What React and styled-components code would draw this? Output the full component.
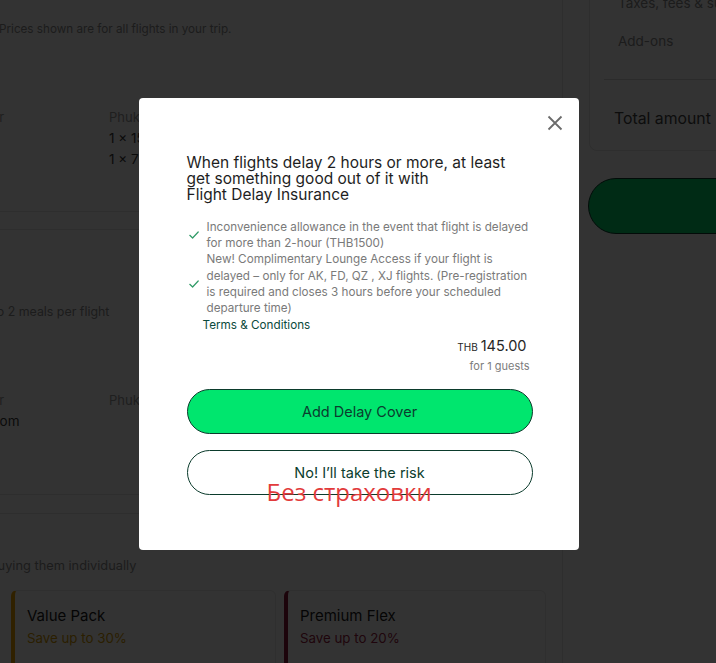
import styled, { createGlobalStyle } from 'styled-components';

const Global = createGlobalStyle`
  html, body {
    margin: 0;
    padding: 0;
    background: #ffffff;
  }
  body {
    font-family: Inter, "Noto Sans", "Liberation Sans", sans-serif;
  }
`

const Screen = styled.div`
  position: relative;
  width: 716px;
  height: 663px;
  overflow: hidden;
  background: #ffffff;
`

const Page = styled.div`
  display: flex;
  gap: 25px;
  margin-left: -100px;
  margin-top: -40px;
`

const MainCol = styled.div`
  width: 663px;
  flex-shrink: 0;
  display: flex;
  flex-direction: column;
  gap: 17px;
`

const Card = styled.section`
  box-sizing: border-box;
  height: ${p => p.$h}px;
  border: 1px solid #e4e4e4;
  border-radius: 8px;
  padding: ${p => p.$pt || 0}px 20px 0 38px;
  margin-top: ${p => p.$mt || 0}px;
`

const Note = styled.p`
  margin: 0 0 0 ${p => p.$ml || 0}px;
  font-size: ${p => p.$size || 11}px;
  line-height: 16px;
  color: #8d8d8d;
`

const Row = styled.div`
  display: grid;
  grid-template-columns: 170px 1fr;
  margin-top: ${p => p.$mt}px;
  font-size: 13px;
  line-height: 21px;
`

const Label = styled.div`
  color: #9a9a9a;
`

const Value = styled.div`
  color: #3a3a3a;
  font-size: 13.5px;
`

const Packs = styled.div`
  display: grid;
  grid-template-columns: 265px 262px;
  gap: 8px;
  margin: 16px 0 0 72px;
`

const Pack = styled.div`
  height: 90px;
  border: 1px solid #e8e8e8;
  border-left: 4px solid ${p => p.$accent};
  border-radius: 6px;
  padding: 16px 12px;
  box-sizing: border-box;
`

const PackTitle = styled.div`
  font-size: 15px;
  line-height: 18px;
  color: #1a1a1a;
`

const PackSave = styled.div`
  font-size: 13.3px;
  line-height: 18px;
  margin-top: 4px;
  color: ${p => p.$color};
`

const Side = styled.aside`
  width: 300px;
  flex-shrink: 0;
`

const SideCard = styled.div`
  box-sizing: border-box;
  height: 191px;
  border: 1px solid #e4e4e4;
  border-radius: 8px;
  padding: 32px 0 0 24px;
  margin-left: 1px;
`

const SideLine = styled.div`
  font-size: ${p => p.$size || 13.5}px;
  line-height: 20px;
  color: ${p => p.$color || '#8a8a8a'};
  margin-top: ${p => p.$mt || 0}px;
  margin-left: ${p => p.$ml || 0}px;
`

const Divider = styled.hr`
  border: none;
  border-top: 1px solid #d8d8d8;
  margin: 28px 0 0 -10px;
`

const BigButton = styled.div`
  height: 56px;
  margin-top: 27px;
  border-radius: 28px;
  background: #00d66a;
  border: 1px solid #0a3b2b;
  box-sizing: border-box;
`

const Overlay = styled.div`
  position: absolute;
  inset: 0;
  background: rgba(0, 0, 0, 0.8);
  display: flex;
  justify-content: center;
  align-items: flex-start;
  padding-top: 98px;
  box-sizing: border-box;
`

const Modal = styled.div`
  width: 440px;
  height: 452px;
  box-sizing: border-box;
  background: #ffffff;
  border-radius: 4px;
  margin-left: 1px;
`

const CloseRow = styled.div`
  display: flex;
  justify-content: flex-end;
  padding: 14px 13px 0 0;
`

const CloseBtn = styled.button`
  width: 22px;
  height: 22px;
  padding: 0;
  border: none;
  background: none;
  display: flex;
  align-items: center;
  justify-content: center;
`

const Body = styled.div`
  padding: 0 46px 0 48px;
`

const Title = styled.h2`
  margin: 21px 0 0;
  font-size: 15.5px;
  line-height: 16px;
  font-weight: 400;
  color: #1e1e1e;
  span {
    display: block;
  }
`

const List = styled.ul`
  list-style: none;
  margin: 16px 0 0;
  padding: 0;
`

const Item = styled.li`
  display: flex;
  align-items: center;
  gap: 8px;
  padding-left: 2px;
  font-size: 11.7px;
  line-height: 16.2px;
  color: #7a7a7a;
  svg {
    flex-shrink: 0;
  }
`

const Terms = styled.a`
  display: block;
  margin: 1px 0 0 16px;
  font-size: 11.7px;
  line-height: 16px;
  color: #0b4a3c;
  text-decoration: none;
`

const PriceBox = styled.div`
  display: flex;
  flex-direction: column;
  align-items: flex-end;
  margin-top: 3px;
`

const Price = styled.div`
  padding-right: 6px;
  font-size: 14.5px;
  line-height: 20px;
  color: #262626;
  small {
    font-size: 10px;
    margin-right: 3px;
  }
`

const Guests = styled.div`
  padding-right: 3px;
  font-size: 11px;
  line-height: 18px;
  color: #7c7c7c;
`

const Button = styled.button`
  display: block;
  width: 100%;
  height: 45px;
  margin-top: ${p => p.$mt}px;
  border-radius: 23px;
  border: 1px solid #0b3b2c;
  background: ${p => (p.$primary ? '#00e66e' : '#ffffff')};
  color: #0b3d2e;
  font-family: inherit;
  font-size: 14.5px;
`

const Skip = styled.div`
  position: relative;
`

const Stamp = styled.div`
  position: absolute;
  left: 80px;
  top: 28px;
  font-family: "Open Sans", "Noto Sans", sans-serif;
  font-size: 24px;
  line-height: 28px;
  color: #e23b3b;
  white-space: nowrap;
`

function Check() {
  return (
    <svg width="10" height="8" viewBox="0 0 10 8" fill="none">
      <path d="M0.8 4.3 L3.6 7 L9.2 1" stroke="#2f9a66" strokeWidth="1.2" strokeLinecap="round" strokeLinejoin="round" />
    </svg>
  )
}

function Background() {
  return (
    <Page>
      <MainCol>
        <Card $h={252} $pt={60}>
          <Note $size={11.7} $ml={60}>Prices shown are for all flights in your trip.</Note>
          <Row $mt={70}>
            <Label>Passenger</Label>
            <div>
              <Label>Phuket - Bangkok</Label>
              <Value>1 x 15kg checked baggage</Value>
              <Value>1 x 7kg carry-on</Value>
            </div>
          </Row>
        </Card>
        <Card $h={266} $pt={74}>
          <Note $size={12.4}>Enjoy up to 2 meals per flight</Note>
          <Row $mt={70}>
            <div>
              <Label>Passenger</Label>
              <Value>Deluxe room</Value>
            </div>
            <Label>Phuket - Bangkok</Label>
          </Row>
        </Card>
        <Card $h={200} $pt={44} $mt={1}>
          <Note $size={12.8}>Save vs buying them individually</Note>
          <Packs>
            <Pack $accent="#f0a500">
              <PackTitle>Value Pack</PackTitle>
              <PackSave $color="#d49a00">Save up to 30%</PackSave>
            </Pack>
            <Pack $accent="#8e1838">
              <PackTitle>Premium Flex</PackTitle>
              <PackSave $color="#9a1a40">Save up to 20%</PackSave>
            </Pack>
          </Packs>
        </Card>
      </MainCol>
      <Side>
        <SideCard>
          <SideLine $ml={4}>Taxes, fees &amp; surcharges</SideLine>
          <SideLine $mt={18} $ml={4}>Add-ons</SideLine>
          <Divider />
          <SideLine $mt={29} $size={15.8} $color="#444">Total amount</SideLine>
        </SideCard>
        <BigButton />
      </Side>
    </Page>
  )
}

export default function App() {
  return (
    <Screen>
      <Global />
      <Background />
      <Overlay>
        <Modal>
          <CloseRow>
            <CloseBtn aria-label="Close">
              <svg width="16" height="16" viewBox="0 0 16 16">
                <path d="M1.5 1.5 L14.5 14.5 M14.5 1.5 L1.5 14.5" stroke="#6b6b6b" strokeWidth="1.8" />
              </svg>
            </CloseBtn>
          </CloseRow>
          <Body>
            <Title>
              When flights delay 2 hours or more, at least get something good out of it with
              <span>Flight Delay Insurance</span>
            </Title>
            <List>
              <Item>
                <Check />
                <span>Inconvenience allowance in the event that flight is delayed for more than 2-hour (THB1500)</span>
              </Item>
              <Item>
                <Check />
                <span>New! Complimentary Lounge Access if your flight is delayed – only for AK, FD, QZ , XJ flights. (Pre-registration is required and closes 3 hours before your scheduled departure time)</span>
              </Item>
            </List>
            <Terms href="#">Terms &amp; Conditions</Terms>
            <PriceBox>
              <Price><small>THB</small>145.00</Price>
              <Guests>for 1 guests</Guests>
            </PriceBox>
            <Button $primary $mt={14}>Add Delay Cover</Button>
            <Skip>
              <Button $mt={16}>No! I’ll take the risk</Button>
              <Stamp>Без страховки</Stamp>
            </Skip>
          </Body>
        </Modal>
      </Overlay>
    </Screen>
  )
}
